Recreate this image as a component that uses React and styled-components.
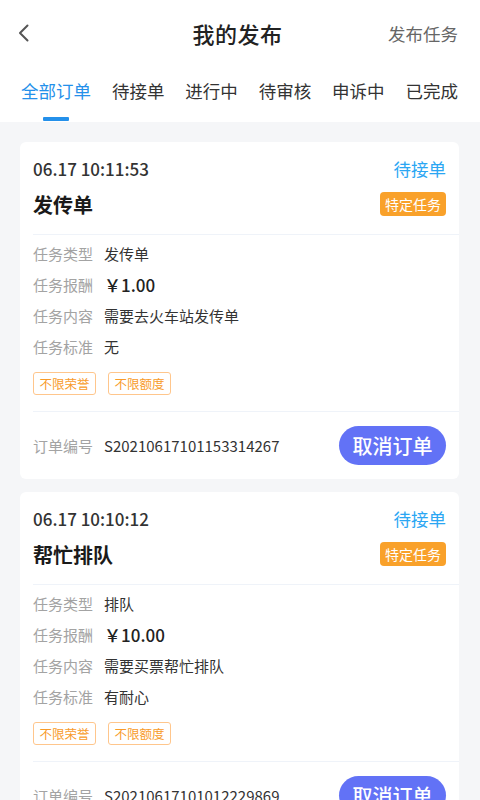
import React from 'react';
import styled, { createGlobalStyle } from 'styled-components';

const GlobalStyle = createGlobalStyle`
  html, body {
    margin: 0;
    padding: 0;
    background: #f5f6f8;
  }
  body {
    font-family: "Noto Sans CJK SC", "Noto Sans", sans-serif;
    -webkit-font-smoothing: antialiased;
  }
  * {
    box-sizing: border-box;
  }
`;

const orders = [
  {
    id: 'S20210617101153314267',
    time: '06.17 10:11:53',
    status: '待接单',
    title: '发传单',
    type: '发传单',
    reward: '1.00',
    content: '需要去火车站发传单',
    standard: '无',
  },
  {
    id: 'S20210617101012229869',
    time: '06.17 10:10:12',
    status: '待接单',
    title: '帮忙排队',
    type: '排队',
    reward: '10.00',
    content: '需要买票帮忙排队',
    standard: '有耐心',
  },
];

const tabs = ['全部订单', '待接单', '进行中', '待审核', '申诉中', '已完成'];

const Page = styled.div`
  min-height: 800px;
  background: #f5f6f8;
`;

const Header = styled.header`
  background: #fff;
`;

const NavBar = styled.div`
  height: 66px;
  display: grid;
  grid-template-columns: 1fr auto 1fr;
  align-items: center;
  padding: 0 22px 0 17px;
`;

const BackButton = styled.button`
  justify-self: start;
  display: flex;
  align-items: center;
  padding: 0;
  border: 0;
  background: none;
  color: #555;
  cursor: pointer;
`;

const Title = styled.h1`
  margin: 0;
  font-size: 22px;
  font-weight: 500;
  color: #222;
  letter-spacing: 0.5px;
`;

const NavAction = styled.span`
  justify-self: end;
  font-size: 17.5px;
  color: #666;
`;

const TabBar = styled.nav`
  height: 56px;
  display: flex;
  justify-content: space-between;
  padding: 0 22px 0 21px;
`;

const Tab = styled.div`
  display: flex;
  flex-direction: column;
  align-items: center;
  cursor: pointer;
`;

const TabLabel = styled.span`
  margin-top: 13px;
  line-height: 24px;
  font-size: 17.5px;
  color: ${p => (p.active ? '#2490ea' : '#333')};
`;

const TabIndicator = styled.span`
  margin-top: 14px;
  width: 26px;
  height: 4px;
  border-radius: 1px;
  background: ${p => (p.active ? '#2490ea' : 'transparent')};
`;

const List = styled.main`
  display: flex;
  flex-direction: column;
  gap: 13px;
  padding: 20px 21px 20px 20px;
`;

const Card = styled.section`
  background: #fff;
  border-radius: 6px;
  padding-left: 13px;
`;

const Section = styled.div`
  padding-right: 13px;
  border-bottom: ${p => (p.last ? 'none' : '1px solid #eff3f9')};
`;

const CardHead = styled(Section)`
  padding-top: 14px;
  padding-bottom: 15px;
`;

const SpreadRow = styled.div`
  display: flex;
  justify-content: space-between;
  align-items: center;
`;

const TimeRow = styled(SpreadRow)`
  height: 24px;
`;

const Time = styled.span`
  font-size: 17px;
  font-weight: 500;
  color: #333;
`;

const Status = styled.span`
  font-size: 17.5px;
  color: #2aa6f3;
`;

const TitleRow = styled(SpreadRow)`
  height: 30px;
  margin-top: 9px;
`;

const TaskTitle = styled.h2`
  margin: 0;
  font-size: 20px;
  font-weight: 700;
  color: #1a1a1a;
`;

const Badge = styled.span`
  height: 24px;
  line-height: 24px;
  padding: 0 5px;
  border-radius: 4px;
  background: #f9a12a;
  color: #fff;
  font-size: 14px;
`;

const Details = styled(Section)`
  padding-top: 3px;
  padding-bottom: 16px;
`;

const InfoRow = styled.div`
  display: flex;
  align-items: center;
  gap: 11px;
  height: 31px;
  font-size: 15px;
`;

const Label = styled.span`
  color: #a3a3a3;
`;

const Value = styled.span`
  color: #333;
`;

const Reward = styled.span`
  font-size: 17px;
  font-weight: 500;
  color: #222;
`;

const Tags = styled.div`
  display: flex;
  gap: 12px;
  margin-top: 10px;
`;

const Tag = styled.span`
  height: 23px;
  line-height: 21px;
  padding: 0 5.5px;
  border: 1px solid #ffc68c;
  border-radius: 3px;
  color: #f89b2a;
  font-size: 12.5px;
`;

const Footer = styled(Section)`
  height: 67px;
  display: flex;
  align-items: center;
  justify-content: space-between;
`;

const OrderNo = styled.div`
  display: flex;
  gap: 11px;
  font-size: 15px;
`;

const CancelButton = styled.button`
  height: 39px;
  padding: 0 13.5px;
  border: 0;
  border-radius: 20px;
  background: #6272f6;
  color: #fff;
  font-family: inherit;
  font-size: 20px;
  font-weight: 500;
  cursor: pointer;
`;

const ChevronLeft = () => (
  <svg width="13" height="18" viewBox="0 0 13 18" fill="none">
    <polyline
      points="10.5,1.5 3,9 10.5,16.5"
      stroke="currentColor"
      strokeWidth="2"
      strokeLinecap="round"
      strokeLinejoin="round"
    />
  </svg>
);

const OrderCard = ({ order }) => (
  <Card>
    <CardHead>
      <TimeRow>
        <Time>{order.time}</Time>
        <Status>{order.status}</Status>
      </TimeRow>
      <TitleRow>
        <TaskTitle>{order.title}</TaskTitle>
        <Badge>特定任务</Badge>
      </TitleRow>
    </CardHead>
    <Details>
      <InfoRow>
        <Label>任务类型</Label>
        <Value>{order.type}</Value>
      </InfoRow>
      <InfoRow>
        <Label>任务报酬</Label>
        <Reward>￥{order.reward}</Reward>
      </InfoRow>
      <InfoRow>
        <Label>任务内容</Label>
        <Value>{order.content}</Value>
      </InfoRow>
      <InfoRow>
        <Label>任务标准</Label>
        <Value>{order.standard}</Value>
      </InfoRow>
      <Tags>
        <Tag>不限荣誉</Tag>
        <Tag>不限额度</Tag>
      </Tags>
    </Details>
    <Footer last>
      <OrderNo>
        <Label>订单编号</Label>
        <Value>{order.id}</Value>
      </OrderNo>
      <CancelButton>取消订单</CancelButton>
    </Footer>
  </Card>
);

export default function App() {
  return (
    <Page>
      <GlobalStyle />
      <Header>
        <NavBar>
          <BackButton aria-label="返回">
            <ChevronLeft />
          </BackButton>
          <Title>我的发布</Title>
          <NavAction>发布任务</NavAction>
        </NavBar>
        <TabBar>
          {tabs.map((t, i) => (
            <Tab key={t}>
              <TabLabel active={i === 0}>{t}</TabLabel>
              <TabIndicator active={i === 0} />
            </Tab>
          ))}
        </TabBar>
      </Header>
      <List>
        {orders.map(o => (
          <OrderCard key={o.id} order={o} />
        ))}
      </List>
    </Page>
  );
}
